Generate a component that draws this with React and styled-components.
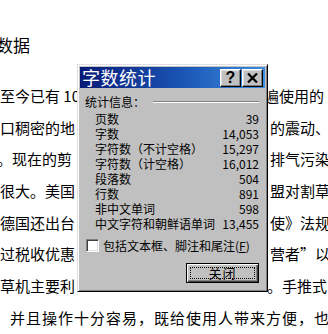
import React from 'react';
import styled, { createGlobalStyle } from 'styled-components';

const GlobalStyle = createGlobalStyle`
  html, body { margin: 0; padding: 0; background: #fff; }
  body { width: 328px; height: 334px; overflow: hidden; }
`;

const Page = styled.div`
  position: relative;
  width: 328px;
  height: 334px;
  overflow: hidden;
  background: #fff;
  color: #000;
  font-family: "Noto Sans CJK SC", "Noto Sans", sans-serif;
`;

const Doc = styled.div`
  display: flex;
  flex-direction: column;
  padding-top: 29px;
`;

const Heading = styled.div`
  font-size: 17px;
  line-height: 32px;
  height: 32px;
  text-indent: -4px;
  margin-bottom: 19px;
  white-space: nowrap;
  overflow: hidden;
`;

const Line = styled.div`
  display: grid;
  grid-template-columns: 77px 191px 60px;
  height: 31.7px;
  line-height: 31.7px;
  font-size: 15px;
  white-space: nowrap;
`;

const LeftPart = styled.span`
  overflow: hidden;
  text-indent: ${(p) => p.$shift || 0}px;
`;

const Gap = styled.span``;

const RightPart = styled.span`
  overflow: hidden;
  text-indent: ${(p) => (p.$start || 270) - 268}px;
`;

const FullLine = styled.div`
  height: 31.7px;
  line-height: 31.7px;
  font-size: 15px;
  letter-spacing: 1px;
  padding-left: 10px;
  white-space: nowrap;
`;

const Dialog = styled.div`
  position: absolute;
  left: 77px;
  top: 64px;
  width: 191px;
  box-sizing: border-box;
  background: #c0c0c0;
  border: 1px solid;
  border-color: #dfdfdf #000 #000 #dfdfdf;
  box-shadow: inset 1px 1px #fff, inset -1px -1px #808080;
  padding: 2px;
  display: flex;
  flex-direction: column;
`;

const TitleBar = styled.div`
  height: 21px;
  display: flex;
  align-items: center;
  padding: 0 2px 0 2px;
  background: linear-gradient(90deg, #081a78 0%, #1a55b4 55%, #3c8fe0 100%);
`;

const TitleText = styled.span`
  color: #fff;
  font-size: 18px;
  line-height: 21px;
  letter-spacing: 0.5px;
  white-space: nowrap;
`;

const TitleButtons = styled.div`
  margin-left: auto;
  display: flex;
  gap: 1px;
`;

const TitleButton = styled.div`
  width: 21px;
  height: 18px;
  box-sizing: border-box;
  background: #c0c0c0;
  border: 1px solid;
  border-color: #fff #000 #000 #fff;
  box-shadow: inset -1px -1px #808080, inset 1px 1px #dfdfdf;
  display: flex;
  align-items: center;
  justify-content: center;
  font-family: "Liberation Sans", Arial, sans-serif;
  font-weight: bold;
  font-size: 16px;
  line-height: 16px;
  color: #000;
`;

const Body = styled.div`
  padding: 6px 6px 6px 5px;
  display: flex;
  flex-direction: column;
  font-size: 12px;
`;

const GroupHeader = styled.div`
  display: flex;
  align-items: center;
  gap: 8px;
  line-height: 15px;
  height: 15px;
`;

const Etched = styled.div`
  flex: 1;
  height: 0;
  border-top: 1px solid #808080;
  border-bottom: 1px solid #fff;
`;

const StatList = styled.div`
  margin-top: 2px;
  padding-left: 10px;
  display: flex;
  flex-direction: column;
`;

const StatRow = styled.div`
  display: flex;
  justify-content: space-between;
  line-height: 15px;
  height: 15px;
  white-space: nowrap;
`;

const StatValue = styled.span`
  font-variant-numeric: tabular-nums;
`;

const CheckRow = styled.div`
  margin-top: 8px;
  padding-left: 1px;
  display: flex;
  align-items: center;
  gap: 4px;
  height: 13px;
  white-space: nowrap;
`;

const CheckBox = styled.div`
  width: 13px;
  height: 13px;
  box-sizing: border-box;
  background: #fff;
  border: 1px solid;
  border-color: #808080 #fff #fff #808080;
  box-shadow: inset 1px 1px #404040, inset -1px -1px #dfdfdf;
`;

const ButtonRow = styled.div`
  margin-top: 11px;
  display: flex;
  justify-content: flex-end;
`;

const DefaultButton = styled.div`
  width: 73px;
  height: 20px;
  box-sizing: border-box;
  border: 1px solid #000;
  background: #c0c0c0;
  box-shadow: inset 1px 1px #fff, inset -1px -1px #404040, inset -2px -2px #808080;
  padding: 3px;
  display: flex;
`;

const FocusRect = styled.div`
  flex: 1;
  border: 1px dotted #000;
  display: flex;
  align-items: center;
  justify-content: center;
  font-size: 13px;
  line-height: 12px;
  letter-spacing: 1px;
`;

const stats = [
  ['页数', '39'],
  ['字数', '14,053'],
  ['字符数（不计空格）', '15,297'],
  ['字符数（计空格）', '16,012'],
  ['段落数', '504'],
  ['行数', '891'],
  ['非中文单词', '598'],
  ['中文字符和朝鲜语单词', '13,455'],
];

const lines = [
  { left: '至今已有 10', right: '遍使用的', start: 264 },
  { left: '口稠密的地', right: '的震动、' },
  { left: '。现在的剪', right: '排气污染', shift: -3 },
  { left: '很大。美国', right: '盟对割草' },
  { left: '德国还出台', right: '使》法规' },
  { left: '过税收优惠', right: '营者”以' },
  { left: '草机主要利', right: '。手推式', start: 267 },
];

export default function App() {
  return (
    <Page>
      <GlobalStyle />
      <Doc>
        <Heading>数据</Heading>
        {lines.map((l, i) => (
          <Line key={i}>
            <LeftPart $shift={l.shift}>{l.left}</LeftPart>
            <Gap />
            <RightPart $start={l.start}>{l.right}</RightPart>
          </Line>
        ))}
        <FullLine>并且操作十分容易，既给使用人带来方便，也</FullLine>
      </Doc>

      <Dialog>
        <TitleBar>
          <TitleText>字数统计</TitleText>
          <TitleButtons>
            <TitleButton>?</TitleButton>
            <TitleButton>
              <svg width="11" height="10" viewBox="0 0 11 10">
                <path d="M1 0.5 L10 9.5 M10 0.5 L1 9.5" stroke="#000" strokeWidth="2.2" fill="none" />
              </svg>
            </TitleButton>
          </TitleButtons>
        </TitleBar>
        <Body>
          <GroupHeader>
            <span>统计信息：</span>
            <Etched />
          </GroupHeader>
          <StatList>
            {stats.map(([label, value]) => (
              <StatRow key={label}>
                <span>{label}</span>
                <StatValue>{value}</StatValue>
              </StatRow>
            ))}
          </StatList>
          <CheckRow>
            <CheckBox />
            <span>
              包括文本框、脚注和尾注(<u>F</u>)
            </span>
          </CheckRow>
          <ButtonRow>
            <DefaultButton>
              <FocusRect>关闭</FocusRect>
            </DefaultButton>
          </ButtonRow>
        </Body>
      </Dialog>
    </Page>
  );
}
